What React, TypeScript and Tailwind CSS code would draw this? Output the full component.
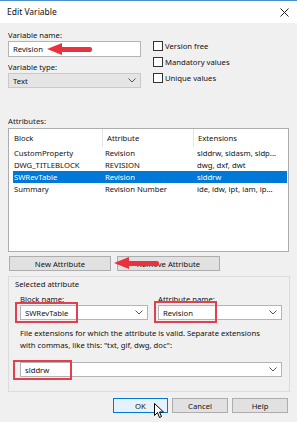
import React from 'react';

const Chevron = () => (
  <svg width="8" height="5" viewBox="0 0 8 5" className="shrink-0">
    <path d="M0.5 0.5 L4 4 L7.5 0.5" fill="none" stroke="#555" strokeWidth="1" />
  </svg>
);

function Combo({ value, width, grey }: { value: string; width: string; grey?: boolean }) {
  return (
    <div
      className={`${width} h-[15px] flex items-center justify-between pl-[4px] pr-[4px] border ${
        grey ? 'bg-[#e5e5e5] border-[#c9c9c9]' : 'bg-white border-[#b4b4b4]'
      }`}
    >
      <span>{value}</span>
      <Chevron />
    </div>
  );
}

function Check({ label }: { label: string }) {
  return (
    <div className="h-[16px] flex items-center">
      <div className="w-[10px] h-[10px] border border-[#333] bg-white mr-[2px]" />
      <span>{label}</span>
    </div>
  );
}

function Button({ label, width, def }: { label: string; width: string; def?: boolean }) {
  return (
    <div
      className={`${width} h-[15px] flex items-center justify-center border ${
        def ? 'bg-[#e5f1fb] border-[#0078d7]' : 'bg-[#e1e1e1] border-[#adadad]'
      }`}
    >
      {label}
    </div>
  );
}

const rows = [
  { block: 'CustomProperty', attr: 'Revision', ext: 'slddrw, sldasm, sldp...' },
  { block: 'DWG_TITLEBLOCK', attr: 'REVISION', ext: 'dwg, dxf, dwt' },
  { block: 'SWRevTable', attr: 'Revision', ext: 'slddrw', selected: true },
  { block: 'Summary', attr: 'Revision Number', ext: 'ide, idw, ipt, iam, ip...' },
];

function RedArrow({ className, shaft }: { className: string; shaft: string }) {
  return (
    <div className={`absolute flex items-center ${className}`}>
      <div className="w-0 h-0 border-y-[6px] border-y-transparent border-r-[15px] border-r-[#e8333f]" />
      <div className={`${shaft} h-[5px] bg-[#e8333f] rounded-r-[2px]`} />
    </div>
  );
}

export default function App() {
  return (
    <div
      className="relative w-[297px] h-[422px] bg-[#f0f0f0] text-[7.7px] leading-[12px] text-[#111] overflow-hidden"
      style={{ fontFamily: '"Noto Sans", "Open Sans", sans-serif' }}
    >
      <div className="h-[23px] bg-white flex items-center justify-between pl-[7px] pr-[8px] border-t border-[#4a90d0]">
        <span className="text-[8.5px]">Edit Variable</span>
        <svg width="9" height="9" viewBox="0 0 9 9">
          <path d="M0.5 0.5 L8.5 8.5 M8.5 0.5 L0.5 8.5" stroke="#222" strokeWidth="1" />
        </svg>
      </div>

      <div className="px-[8px]">
        <div className="flex">
          <div className="w-[133px] flex flex-col">
            <div className="mt-[6px]">Variable name:</div>
            <div className="h-[16px] bg-white border border-[#b4b4b4] flex items-center pl-[4px]">Revision</div>
            <div className="mt-[4px]">Variable type:</div>
            <Combo value="Text" width="w-[133px]" grey />
          </div>
          <div className="ml-[12px] mt-[15px] flex flex-col">
            <Check label="Version free" />
            <Check label="Mandatory values" />
            <Check label="Unique values" />
          </div>
        </div>

        <div className="mt-[27px] text-[#222]">Attributes:</div>
        <div className="mt-[1px] w-[281px] h-[124px] bg-white border border-[#adadad]">
          <div className="h-[18px] flex items-center pl-[4px]">
            <div className="w-[89px] h-full flex items-center pl-[1px]">Block</div>
            <div className="w-px h-full bg-[#e5e5e5]" />
            <div className="w-[90px] h-full flex items-center pl-[4px]">Attribute</div>
            <div className="w-px h-full bg-[#e5e5e5]" />
            <div className="h-full flex items-center pl-[4px]">Extensions</div>
          </div>
          {rows.map((r) => (
            <div
              key={r.block}
              className={`ml-[4px] mr-[1px] h-[12px] flex items-center ${
                r.selected ? 'bg-[#0078d7] text-white' : ''
              }`}
            >
              <div className="w-[92px] pl-[1px]">{r.block}</div>
              <div className="w-[92px]">{r.attr}</div>
              <div>{r.ext}</div>
            </div>
          ))}
        </div>

        <div className="mt-[4px] flex gap-[6px] pl-[1px]">
          <Button label="New Attribute" width="w-[102px]" />
          <Button label="Remove Attribute" width="w-[103px]" />
        </div>

        <div className="mt-[5px] w-[282px] h-[116px] border border-[#dcdcdc] flex flex-col">
          <div className="pl-[6px] mt-[1px]">Selected attribute</div>
          <div className="pl-[11px] pr-[7px] flex flex-col">
            <div className="flex gap-[10px] mt-[3px]">
              <div className="flex flex-col">
                <div>Block name:</div>
                <Combo value="SWRevTable" width="w-[128px]" />
              </div>
              <div className="flex flex-col">
                <div>Attribute name:</div>
                <Combo value="Revision" width="w-[124px]" />
              </div>
            </div>
            <div className="mt-[7px]">
              File extensions for which the attribute is valid. Separate extensions
              <br />
              with commas, like this: "txt, gif, dwg, doc":
            </div>
            <div className="mt-[11px]">
              <Combo value="slddrw" width="w-[262px]" />
            </div>
          </div>
        </div>

        <div className="mt-[6px] flex justify-end gap-[4px] pr-[1px]">
          <Button label="OK" width="w-[55px]" def />
          <Button label="Cancel" width="w-[56px]" />
          <Button label="Help" width="w-[56px]" />
        </div>
      </div>

      {/* annotations */}
      <RedArrow className="left-[47px] top-[43px]" shaft="w-[30px]" />
      <RedArrow className="left-[114px] top-[257px]" shaft="w-[30px]" />
      <div className="absolute left-[15px] top-[302px] w-[63px] h-[21px] border-2 border-[#e04050]" />
      <div className="absolute left-[154px] top-[301px] w-[63px] h-[22px] border-2 border-[#e04050]" />
      <div className="absolute left-[13px] top-[360px] w-[59px] h-[20px] border-2 border-[#e04050]" />

      <svg className="absolute left-[154px] top-[403px]" width="10" height="16" viewBox="0 0 10 16">
        <path d="M0.5 0.5 L0.5 12.5 L3.5 9.5 L5.5 14.5 L7.5 13.5 L5.5 9 L9.5 9 Z" fill="white" stroke="black" strokeWidth="1" />
      </svg>
    </div>
  );
}
